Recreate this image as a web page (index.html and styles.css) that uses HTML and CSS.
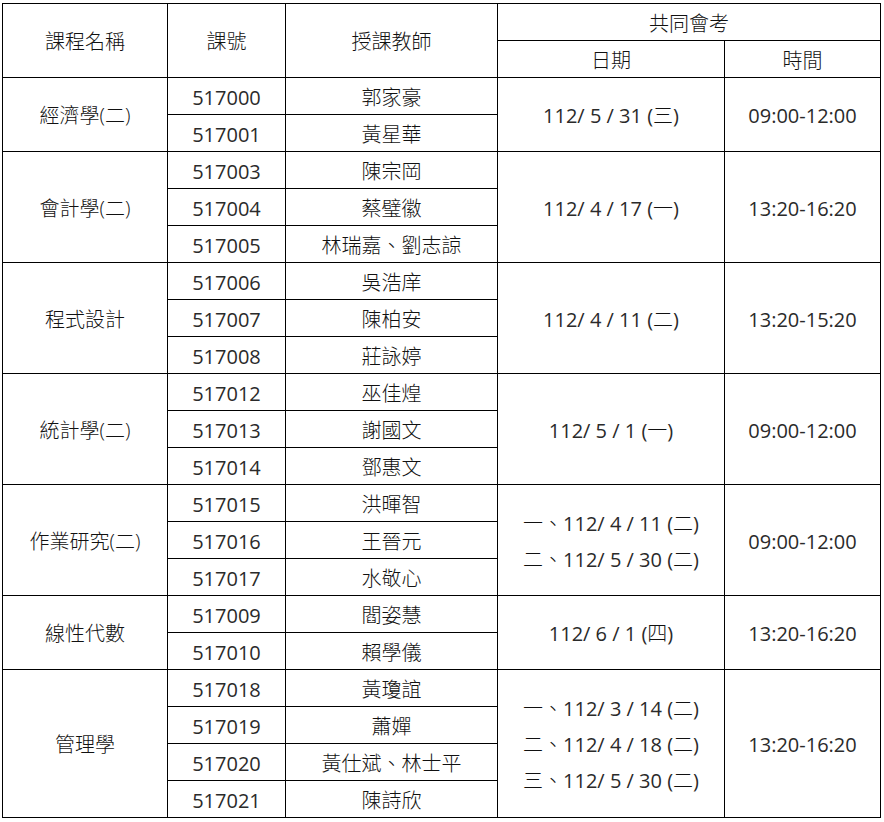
FILE: index.html
```html
<!DOCTYPE html>
<html lang="zh-Hant">
<head>
<meta charset="utf-8">
<title>共同會考</title>
<link rel="stylesheet" href="styles.css">
</head>
<body>
<table class="exam">
  <colgroup>
    <col class="c-name">
    <col class="c-code">
    <col class="c-teacher">
    <col class="c-date">
    <col class="c-time">
  </colgroup>
  <thead>
    <tr>
      <th rowspan="2">課程名稱</th>
      <th rowspan="2">課號</th>
      <th rowspan="2">授課教師</th>
      <th colspan="2">共同會考</th>
    </tr>
    <tr>
      <th>日期</th>
      <th>時間</th>
    </tr>
  </thead>
  <tbody>
    <tr>
      <td class="zh" rowspan="2">經濟學(二)</td>
      <td class="num">517000</td>
      <td class="zh">郭家豪</td>
      <td class="num" rowspan="2">112/ 5 / 31 (<span class="zh">三</span>)</td>
      <td class="num" rowspan="2">09:00-12:00</td>
    </tr>
    <tr><td class="num">517001</td><td class="zh">黃星華</td></tr>

    <tr>
      <td class="zh" rowspan="3">會計學(二)</td>
      <td class="num">517003</td>
      <td class="zh">陳宗岡</td>
      <td class="num" rowspan="3">112/ 4 / 17 (<span class="zh">一</span>)</td>
      <td class="num" rowspan="3">13:20-16:20</td>
    </tr>
    <tr><td class="num">517004</td><td class="zh">蔡璧徽</td></tr>
    <tr><td class="num">517005</td><td class="zh">林瑞嘉、劉志諒</td></tr>

    <tr>
      <td class="zh" rowspan="3">程式設計</td>
      <td class="num">517006</td>
      <td class="zh">吳浩庠</td>
      <td class="num" rowspan="3">112/ 4 / 11 (<span class="zh">二</span>)</td>
      <td class="num" rowspan="3">13:20-15:20</td>
    </tr>
    <tr><td class="num">517007</td><td class="zh">陳柏安</td></tr>
    <tr><td class="num">517008</td><td class="zh">莊詠婷</td></tr>

    <tr>
      <td class="zh" rowspan="3">統計學(二)</td>
      <td class="num">517012</td>
      <td class="zh">巫佳煌</td>
      <td class="num" rowspan="3">112/ 5 / 1 (<span class="zh">一</span>)</td>
      <td class="num" rowspan="3">09:00-12:00</td>
    </tr>
    <tr><td class="num">517013</td><td class="zh">謝國文</td></tr>
    <tr><td class="num">517014</td><td class="zh">鄧惠文</td></tr>

    <tr>
      <td class="zh" rowspan="3">作業研究(二)</td>
      <td class="num">517015</td>
      <td class="zh">洪暉智</td>
      <td class="num" rowspan="3">
        <div class="line"><span class="zh">一、</span>112/ 4 / 11 (<span class="zh">二</span>)</div>
        <div class="line"><span class="zh">二、</span>112/ 5 / 30 (<span class="zh">二</span>)</div>
      </td>
      <td class="num" rowspan="3">09:00-12:00</td>
    </tr>
    <tr><td class="num">517016</td><td class="zh">王晉元</td></tr>
    <tr><td class="num">517017</td><td class="zh">水敬心</td></tr>

    <tr>
      <td class="zh" rowspan="2">線性代數</td>
      <td class="num">517009</td>
      <td class="zh">閻姿慧</td>
      <td class="num" rowspan="2">112/ 6 / 1 (<span class="zh">四</span>)</td>
      <td class="num" rowspan="2">13:20-16:20</td>
    </tr>
    <tr><td class="num">517010</td><td class="zh">賴學儀</td></tr>

    <tr>
      <td class="zh" rowspan="4">管理學</td>
      <td class="num">517018</td>
      <td class="zh">黃瓊誼</td>
      <td class="num" rowspan="4">
        <div class="line"><span class="zh">一、</span>112/ 3 / 14 (<span class="zh">二</span>)</div>
        <div class="line"><span class="zh">二、</span>112/ 4 / 18 (<span class="zh">二</span>)</div>
        <div class="line"><span class="zh">三、</span>112/ 5 / 30 (<span class="zh">二</span>)</div>
      </td>
      <td class="num" rowspan="4">13:20-16:20</td>
    </tr>
    <tr><td class="num">517019</td><td class="zh">蕭嬋</td></tr>
    <tr><td class="num">517020</td><td class="zh">黃仕斌、林士平</td></tr>
    <tr><td class="num">517021</td><td class="zh">陳詩欣</td></tr>
  </tbody>
</table>
</body>
</html>
```

FILE: styles.css
```css
html, body {
  background: #ffffff;
}

body {
  margin: 0;
  padding: 3px 0 0 2px;
  font-family: "Open Sans", "Noto Sans CJK TC", sans-serif;
  font-size: 20px;
  color: #111111;
}

.exam {
  border-collapse: collapse;
  table-layout: fixed;
  width: 878px;
}

.c-name { width: 165px; }
.c-code { width: 118px; }
.c-teacher { width: 212px; }
.c-date { width: 227px; }
.c-time { width: 156px; }

.exam tr {
  height: 37px;
}

.exam th,
.exam td {
  border: 1.5px solid #000;
  padding: 3px 0 0;
  text-align: center;
  vertical-align: middle;
  font-weight: 300;
  line-height: 24px;
  white-space: nowrap;
}

.exam .num {
  font-weight: 400;
  color: #2a2a2a;
}

.exam .zh {
  font-weight: 300;
  color: #111111;
}

.exam .line {
  line-height: 36px;
}
```
